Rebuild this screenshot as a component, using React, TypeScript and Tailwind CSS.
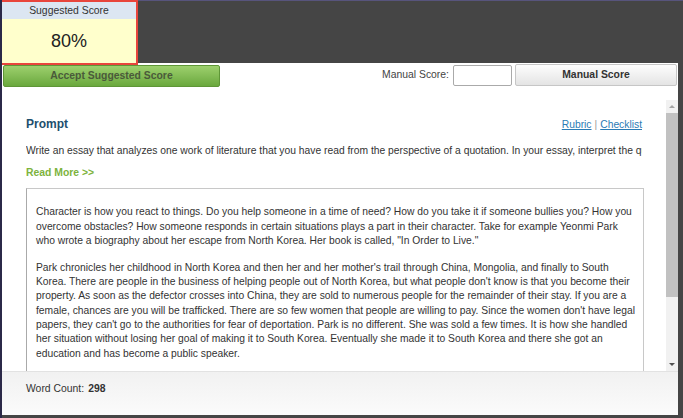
import React from "react";

const essay: string[][] = [
  [
    "Character is how you react to things. Do you help someone in a time of need? How do you take it if someone bullies you? How you",
    "overcome obstacles? How someone responds in certain situations plays a part in their character. Take for example Yeonmi Park",
    "who wrote a biography about her escape from North Korea. Her book is called, \"In Order to Live.\"",
  ],
  [
    "Park chronicles her childhood in North Korea and then her and her mother's trail through China, Mongolia, and finally to South",
    "Korea. There are people in the business of helping people out of North Korea, but what people don't know is that you become their",
    "property. As soon as the defector crosses into China, they are sold to numerous people for the remainder of their stay. If you are a",
    "female, chances are you will be trafficked. There are so few women that people are willing to pay. Since the women don't have legal",
    "papers, they can't go to the authorities for fear of deportation. Park is no different. She was sold a few times. It is how she handled",
    "her situation without losing her goal of making it to South Korea. Eventually she made it to South Korea and there she got an",
    "education and has become a public speaker.",
  ],
];

function ScoreBox() {
  return (
    <div className="relative z-10 -mt-px -ml-[2px] w-[138px] h-[65px] border-2 border-[#e8453c] flex flex-col">
      <div className="h-[17px] bg-[#dce6f2] text-center text-[10.4px] leading-[17px] text-[#333]">
        Suggested Score
      </div>
      <div className="flex-1 bg-[#ffffcc] flex items-center justify-center text-[18px] text-[#222]">
        80%
      </div>
    </div>
  );
}

function Scrollbar() {
  return (
    <div className="w-[12px] bg-[#f1f1f1] flex flex-col items-center">
      <div className="h-[13px] flex items-center justify-center">
        <div className="w-0 h-0 border-l-[3px] border-r-[3px] border-b-[3px] border-l-transparent border-r-transparent border-b-[#a3a3a3]" />
      </div>
      <div className="w-full h-[184px] bg-[#c1c1c1]" />
      <div className="flex-1" />
      <div className="h-[13px] flex items-center justify-center">
        <div className="w-0 h-0 border-l-[3px] border-r-[3px] border-t-[3px] border-l-transparent border-r-transparent border-t-[#505050]" />
      </div>
    </div>
  );
}

export default function App() {
  return (
    <div className="w-[683px] h-[418px] bg-[#454545] border-l-2 border-[#2b2948] flex flex-col overflow-hidden font-['Liberation_Sans',Arial,sans-serif] text-[#333]">
      <div className="flex h-[63px] shrink-0 border-t border-[#57547c]">
        <ScoreBox />
      </div>

      <div className="flex-1 min-h-0 mr-[5px] mb-[3px] bg-white flex flex-col">
        <div className="flex items-center h-[24px] shrink-0 pr-px">
          <button className="ml-px mt-px w-[217px] h-[22px] rounded-[2px] border border-[#5f9637] bg-gradient-to-b from-[#9dd06d] to-[#6aa83d] text-[10.4px] font-bold text-[#4a5a3a]">
            Accept Suggested Score
          </button>
          <span className="ml-auto text-[10.4px] text-[#444]">Manual Score:</span>
          <input
            className="ml-[4px] w-[59px] h-[21px] border border-[#aaaaaa] rounded-[2px] bg-white"
            aria-label="manual score"
          />
          <button className="ml-[3px] w-[162px] h-[22px] rounded-[2px] border border-[#c6c6c6] bg-gradient-to-b from-[#fdfdfd] to-[#e4e4e4] text-[10.4px] font-bold text-[#333]">
            Manual Score
          </button>
        </div>

        <div className="h-[13px] shrink-0" />

        <div className="flex-1 min-h-0 flex">
          <div className="flex-1 overflow-hidden pl-[24px] pt-[17px]">
            <div className="flex items-center w-[616px]">
              <h1 className="text-[12px] font-bold text-[#1d4f6e] leading-[15px]">Prompt</h1>
              <div className="ml-auto text-[10.3px] text-[#999]">
                <a className="text-[#2a7bb5] underline">Rubric</a>
                <span className="px-[3px]">|</span>
                <a className="text-[#2a7bb5] underline">Checklist</a>
              </div>
            </div>
            <p className="mt-[12px] w-[616px] text-[10.3px] leading-[14px] whitespace-nowrap overflow-hidden">
              Write an essay that analyzes one work of literature that you have read from the perspective of a quotation. In your essay, interpret the qu
            </p>
            <a className="block mt-[8px] text-[10.4px] leading-[14px] font-bold text-[#7db33d]">Read More &gt;&gt;</a>
            <div className="mt-[8px] w-[618px] border border-[#c8c8c8] border-l-[#aaaaaa] pl-[9px] pt-[16px] text-[10.3px] leading-[14.35px] text-[#333]">
              {essay.map((para, i) => (
                <p key={i} className="mb-[12.3px] whitespace-nowrap">
                  {para.map((line, j) => (
                    <span key={j} className="block">
                      {line}
                    </span>
                  ))}
                </p>
              ))}
              <p className="h-[40px]" />
            </div>
          </div>
          <Scrollbar />
        </div>

        <div className="h-[44px] shrink-0 border-t border-[#e2e2e2] bg-gradient-to-b from-[#f1f1f1] to-[#fbfbfb] pl-[24px] pt-[10px] flex items-start leading-[14px] text-[10.4px] text-[#333]">
          <span>Word Count:</span>
          <span className="ml-[4px] font-bold">298</span>
        </div>
      </div>
    </div>
  );
}
